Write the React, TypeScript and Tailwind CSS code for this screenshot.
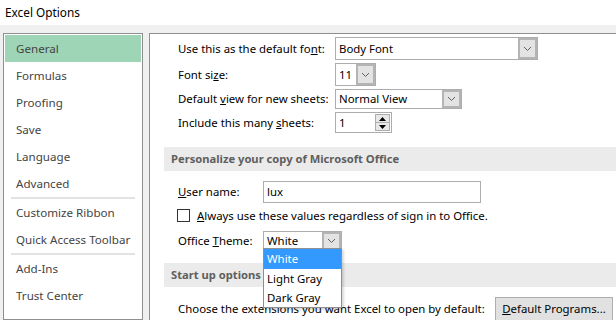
import React from 'react';

const NAV_TOP = ['General', 'Formulas', 'Proofing', 'Save', 'Language', 'Advanced'];
const NAV_MID = ['Customize Ribbon', 'Quick Access Toolbar'];
const NAV_END = ['Add-Ins', 'Trust Center'];

function Chevron() {
  return (
    <svg width="9" height="6" viewBox="0 0 9 6">
      <path d="M1 1 L4.5 4.5 L8 1" fill="none" stroke="#606060" strokeWidth="1" />
    </svg>
  );
}

function Combo({ value, width, height }: { value: string; width: string; height: string }) {
  return (
    <div className={`flex ${width} ${height} border border-[#adadad] bg-white`}>
      <div className="flex flex-1 items-center pl-[3px] text-black">{value}</div>
      <div className="flex w-[19px] items-center justify-center border-2 border-[#b4b4b4] bg-[#e3e3e3]">
        <Chevron />
      </div>
    </div>
  );
}

function NavItem({ label, active }: { label: string; active?: boolean }) {
  return (
    <div className={`flex h-[27px] items-center pl-[11px] ${active ? 'bg-[#9fd5b7]' : ''}`}>{label}</div>
  );
}

function Section({ title }: { title: string }) {
  return (
    <div className="ml-[14px] flex h-[24px] items-center bg-[#ebebeb] pl-[7px] text-[11.2px] font-bold text-[#5e5e5e]">
      {title}
    </div>
  );
}

export default function App() {
  return (
    <div className="relative h-[320px] w-[616px] overflow-hidden whitespace-nowrap bg-[#f0f0f0] text-[11.4px] text-black [font-family:'Noto_Sans',sans-serif]">
      <div className="flex h-[25px] items-center bg-white pl-[5px] text-[11.8px]">Excel Options</div>
      <div className="flex h-[295px] pl-[3px] pt-[8px]">
        <div className="w-[140px] border border-[#8f8f8f] bg-white p-[1px] text-[11.6px] text-[#444]">
          {NAV_TOP.map((n, i) => (
            <NavItem key={n} label={n} active={i === 0} />
          ))}
          <div className="mx-[6px] h-[2px] bg-[#e3e3e3]" />
          {NAV_MID.map((n) => (
            <NavItem key={n} label={n} />
          ))}
          <div className="mx-[6px] h-[2px] bg-[#e3e3e3]" />
          {NAV_END.map((n) => (
            <NavItem key={n} label={n} />
          ))}
        </div>
        <div className="ml-[6px] flex-1 border-l border-t border-[#8f8f8f] bg-white pt-[3px]">
          <div className="flex h-[23px] items-center">
            <span className="w-[185px] pl-[28px]">
              Use this as the default fo<u>n</u>t:
            </span>
            <Combo value="Body Font" width="w-[203px]" height="h-[23px]" />
          </div>
          <div className="mt-[3px] flex h-[23px] items-center">
            <span className="w-[185px] pl-[28px]">
              Font si<u>z</u>e:
            </span>
            <Combo value="11" width="w-[41px]" height="h-[23px]" />
          </div>
          <div className="mt-[3px] flex h-[20px] items-center">
            <span className="w-[185px] pl-[28px]">
              Default <u>v</u>iew for new sheets:
            </span>
            <Combo value="Normal View" width="w-[127px]" height="h-[20px]" />
          </div>
          <div className="mt-[3px] flex h-[21px] items-center">
            <span className="w-[185px] pl-[28px]">
              Include this many <u>s</u>heets:
            </span>
            <div className="flex h-[21px] w-[57px] border border-[#adadad] bg-white">
              <div className="flex flex-1 items-center pl-[3px]">1</div>
              <div className="my-[1px] mr-[1px] flex w-[15px] flex-col border border-[#adadad]">
                <div className="flex flex-1 items-center justify-center border-b border-[#adadad] bg-[#e8e8e8]">
                  <svg width="7" height="4" viewBox="0 0 7 4">
                    <path d="M0 4 L3.5 0 L7 4 Z" fill="#000" />
                  </svg>
                </div>
                <div className="flex flex-1 items-center justify-center bg-[#e8e8e8]">
                  <svg width="7" height="4" viewBox="0 0 7 4">
                    <path d="M0 0 L3.5 4 L7 0 Z" fill="#000" />
                  </svg>
                </div>
              </div>
            </div>
          </div>
          <div className="mt-[14px]">
            <Section title="Personalize your copy of Microsoft Office" />
          </div>
          <div className="mt-[10px] flex h-[22px] items-center">
            <span className="w-[113px] pl-[28px]">
              <u>U</u>ser name:
            </span>
            <div className="flex h-[22px] w-[218px] items-center border border-[#adadad] pl-[3px]">lux</div>
          </div>
          <div className="mt-[4px] flex h-[17px] items-center pl-[27px]">
            <div className="h-[13px] w-[13px] border border-[#333] bg-white" />
            <span className="ml-[7px]">
              <u>A</u>lways use these values regardless of sign in to Office.
            </span>
          </div>
          <div className="mt-[7px] flex h-[20px] items-center">
            <span className="w-[113px] pl-[28px]">
              Office <u>T</u>heme:
            </span>
            <Combo value="White" width="w-[79px]" height="h-[20px]" />
          </div>
          <div className="mt-[12px]">
            <Section title="Start up options" />
          </div>
          <div className="mt-[10px] flex h-[24px] items-center">
            <span className="w-[345px] pl-[28px]">Choose the extensions you want Excel to open by default:</span>
            <div className="flex h-[24px] w-[118px] items-center justify-center border border-[#adadad] bg-[#e1e1e1]">
              <span>
                <u>D</u>efault Programs...
              </span>
            </div>
          </div>
        </div>
      </div>
      <div className="absolute left-[263px] top-[248px] w-[79px] border border-[#8f8f8f] bg-white shadow-[2px_2px_2px_rgba(0,0,0,0.15)]">
        <div className="flex h-[20px] items-center bg-[#3399ff] pl-[3px] text-white">White</div>
        <div className="flex h-[19px] items-center pl-[3px]">Light Gray</div>
        <div className="flex h-[19px] items-center pl-[3px]">Dark Gray</div>
      </div>
    </div>
  );
}
